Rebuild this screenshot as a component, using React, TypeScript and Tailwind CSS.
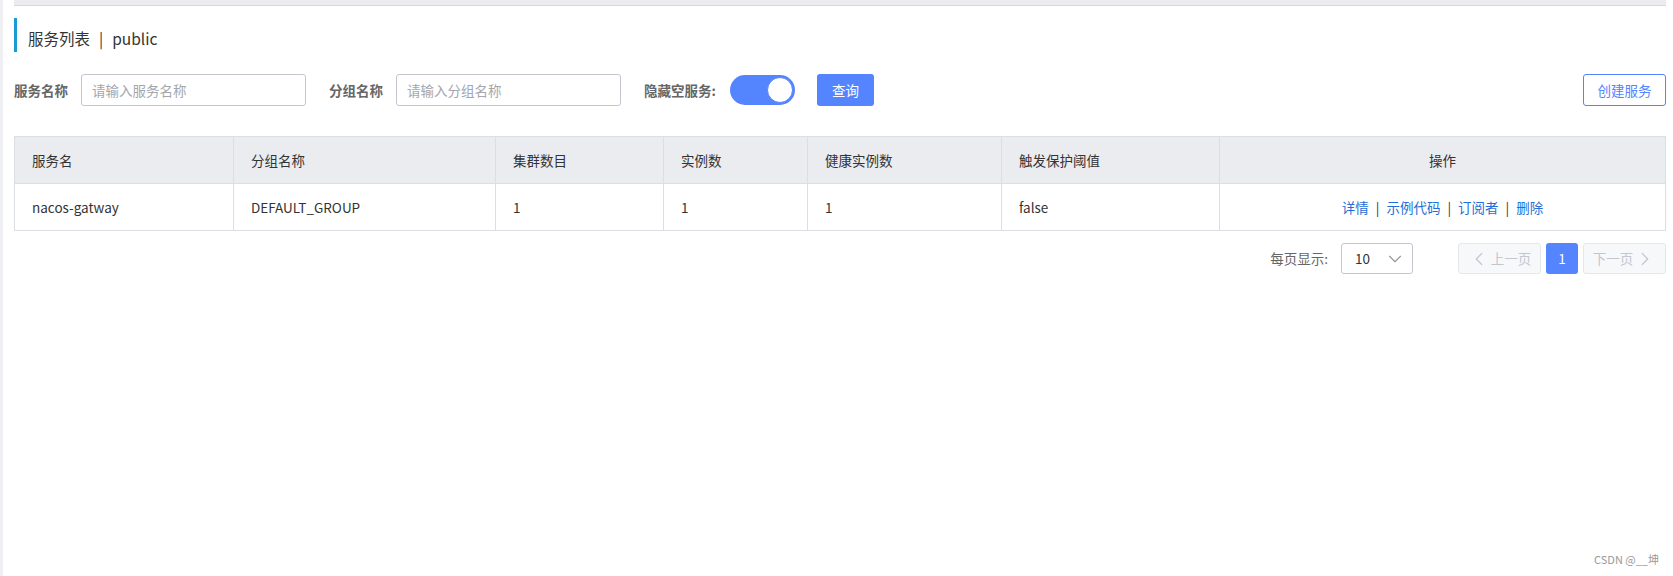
import { ChevronDown, ChevronLeft, ChevronRight } from 'lucide-react';

const font = { fontFamily: '"Noto Sans CJK SC", "Noto Sans", sans-serif' };

const columns = [
  { title: '服务名', width: 219 },
  { title: '分组名称', width: 262 },
  { title: '集群数目', width: 168 },
  { title: '实例数', width: 144 },
  { title: '健康实例数', width: 194 },
  { title: '触发保护阈值', width: 218 },
  { title: '操作', width: 446 },
];

const rows = [
  { name: 'nacos-gatway', group: 'DEFAULT_GROUP', clusters: '1', instances: '1', healthy: '1', threshold: 'false' },
];

function FilterInput({ placeholder }: { readonly placeholder: string }) {
  return (
    <input
      className="h-[32px] w-[225px] rounded-[3px] border border-[#c4c6cf] bg-white px-[10px] text-[13.5px] text-[#333] outline-none placeholder:text-[#a3a6ad]"
      placeholder={placeholder}
    />
  );
}

function Toggle() {
  return (
    <div className="flex h-[30px] w-[65px] items-center justify-end rounded-full bg-[#5584ff] pr-[2px]">
      <div className="h-[26px] w-[26px] rounded-full border border-[#5584ff] bg-white" />
    </div>
  );
}

export default function App() {
  return (
    <div className="relative flex h-[576px] w-full bg-white text-[#333]" style={font}>
      <div className="w-[3px] shrink-0 bg-[#eef0f3]" />
      <div className="flex min-w-0 flex-1 flex-col pl-[11px] pr-[7px]">
        <div className="h-[6px] border-b border-[#d6d7da] bg-[#ececee]" />

        <div className="mt-[12px] flex h-[34px] items-center border-l-[3px] border-[#1a9ad6] pl-[11px] pt-[7px] text-[15.5px] text-[#333]">
          服务列表
          <span className="mx-[9px]">|</span>
          public
        </div>

        <div className="mt-[22px] flex h-[32px] items-center">
          <span className="mr-[13px] text-[13.5px] font-bold text-[#666]">服务名称</span>
          <FilterInput placeholder="请输入服务名称" />
          <span className="ml-[23px] mr-[13px] text-[13.5px] font-bold text-[#666]">分组名称</span>
          <FilterInput placeholder="请输入分组名称" />
          <span className="ml-[23px] mr-[14px] text-[13.5px] font-bold text-[#666]">隐藏空服务:</span>
          <Toggle />
          <button className="ml-[22px] h-[32px] w-[57px] rounded-[3px] bg-[#5584ff] text-[13.5px] text-white">
            查询
          </button>
          <button className="ml-auto h-[32px] w-[83px] rounded-[3px] border border-[#5584ff] bg-white text-[13.5px] text-[#5584ff]">
            创建服务
          </button>
        </div>

        <table className="mt-[30px] w-[1652px] table-fixed border-collapse border border-[#dcdee3] text-[13.5px]">
          <colgroup>
            {columns.map((c) => (
              <col key={c.title} style={{ width: c.width }} />
            ))}
          </colgroup>
          <thead>
            <tr className="h-[47px] bg-[#ebecf0]">
              {columns.map((c, i) => (
                <th
                  key={c.title}
                  className={`border border-[#dcdee3] px-[17px] font-normal text-[#333] ${
                    i === columns.length - 1 ? 'text-center' : 'text-left'
                  }`}
                >
                  {c.title}
                </th>
              ))}
            </tr>
          </thead>
          <tbody>
            {rows.map((r) => (
              <tr key={r.name} className="h-[47px]">
                <td className="border border-[#dcdee3] px-[17px]">{r.name}</td>
                <td className="border border-[#dcdee3] px-[17px]">{r.group}</td>
                <td className="border border-[#dcdee3] px-[17px]">{r.clusters}</td>
                <td className="border border-[#dcdee3] px-[17px]">{r.instances}</td>
                <td className="border border-[#dcdee3] px-[17px]">{r.healthy}</td>
                <td className="border border-[#dcdee3] px-[17px]">{r.threshold}</td>
                <td className="border border-[#dcdee3] px-[17px] text-center">
                  <span className="text-[#1f6fd6]">详情</span>
                  <span className="mx-[7px] text-[#333]">|</span>
                  <span className="text-[#1f6fd6]">示例代码</span>
                  <span className="mx-[7px] text-[#333]">|</span>
                  <span className="text-[#1f6fd6]">订阅者</span>
                  <span className="mx-[7px] text-[#333]">|</span>
                  <span className="text-[#1f6fd6]">删除</span>
                </td>
              </tr>
            ))}
          </tbody>
        </table>

        <div className="mt-[12px] flex h-[31px] items-center justify-end">
          <span className="mr-[13px] text-[13.5px] text-[#666]">每页显示:</span>
          <div className="flex h-[31px] w-[72px] items-center justify-between rounded-[3px] border border-[#c4c6cf] pl-[13px] pr-[6px] text-[13.5px] text-[#333]">
            10
            <ChevronDown className="h-[22px] w-[22px] text-[#999]" strokeWidth={1.2} />
          </div>
          <button className="ml-[45px] flex h-[31px] w-[83px] items-center justify-center rounded-[3px] border border-[#e6e7eb] bg-[#f7f8fa] text-[13.5px] text-[#c4c6cf]">
            <ChevronLeft className="mr-[1px] h-[22px] w-[22px]" strokeWidth={1.3} />
            上一页
          </button>
          <button className="ml-[5px] h-[31px] w-[32px] rounded-[3px] bg-[#5584ff] text-[13.5px] text-white">
            1
          </button>
          <button className="ml-[5px] flex h-[31px] w-[83px] items-center justify-center rounded-[3px] border border-[#e6e7eb] bg-[#f7f8fa] text-[13.5px] text-[#c4c6cf]">
            下一页
            <ChevronRight className="ml-[1px] h-[22px] w-[22px]" strokeWidth={1.3} />
          </button>
        </div>
      </div>

      <div className="absolute bottom-[9px] right-[14px] text-[11px] text-[#999]">CSDN @__坤</div>
    </div>
  );
}
